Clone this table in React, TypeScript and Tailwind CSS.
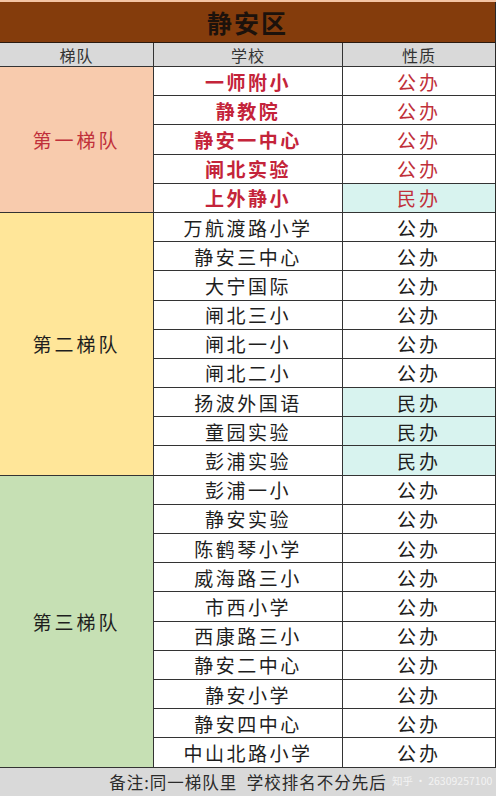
import React from "react";

type Row = { name: string; type: "公办" | "民办" };
type Tier = { label: string; red: boolean; bg: string; span: string; rows: Row[] };

const tiers: Tier[] = [
  {
    label: "第一梯队",
    red: true,
    bg: "bg-[#f8cbad]",
    span: "row-span-5",
    rows: [
      { name: "一师附小", type: "公办" },
      { name: "静教院", type: "公办" },
      { name: "静安一中心", type: "公办" },
      { name: "闸北实验", type: "公办" },
      { name: "上外静小", type: "民办" },
    ],
  },
  {
    label: "第二梯队",
    red: false,
    bg: "bg-[#ffe699]",
    span: "row-span-9",
    rows: [
      { name: "万航渡路小学", type: "公办" },
      { name: "静安三中心", type: "公办" },
      { name: "大宁国际", type: "公办" },
      { name: "闸北三小", type: "公办" },
      { name: "闸北一小", type: "公办" },
      { name: "闸北二小", type: "公办" },
      { name: "扬波外国语", type: "民办" },
      { name: "童园实验", type: "民办" },
      { name: "彭浦实验", type: "民办" },
    ],
  },
  {
    label: "第三梯队",
    red: false,
    bg: "bg-[#c6e0b4]",
    span: "row-span-10",
    rows: [
      { name: "彭浦一小", type: "公办" },
      { name: "静安实验", type: "公办" },
      { name: "陈鹤琴小学", type: "公办" },
      { name: "威海路三小", type: "公办" },
      { name: "市西小学", type: "公办" },
      { name: "西康路三小", type: "公办" },
      { name: "静安二中心", type: "公办" },
      { name: "静安小学", type: "公办" },
      { name: "静安四中心", type: "公办" },
      { name: "中山北路小学", type: "公办" },
    ],
  },
];

export default function App() {
  return (
    <div
      className="w-[500px] h-[796px] bg-white overflow-hidden flex flex-col"
      style={{ fontFamily: '"Noto Sans CJK SC", "Noto Sans", sans-serif' }}
    >
      <div className="h-[2px] w-[496px] bg-[#f4c4a4]" />
      <div className="w-[496px] border-r-[1.5px] border-[#2a2a2a] flex flex-col">
        <div className="h-[41px] bg-[#843c0c] border-b border-[#2a1a10] flex items-center justify-center">
          <span className="text-[25px] font-bold text-[#1c120c] tracking-[2px] leading-none">静安区</span>
        </div>
        <div className="h-[24px] bg-[#d9d9d9] border-b border-[#333] grid grid-cols-[154px_189px_1fr] text-[16px] text-[#333] leading-none">
          <div className="flex items-center justify-center border-r-[1.5px] border-[#333] tracking-[1px]">梯队</div>
          <div className="flex items-center justify-center border-r-[1.5px] border-[#333] tracking-[1px]">学校</div>
          <div className="flex items-center justify-center tracking-[1px]">性质</div>
        </div>
        <div className="grid grid-cols-[154px_189px_1fr] grid-rows-[repeat(24,29.2px)]">
          {tiers.map((tier) => (
            <React.Fragment key={tier.label}>
              <div
                className={`${tier.span} ${tier.bg} border-r-[1.5px] border-b-[1.5px] border-[#333] flex items-center justify-center text-[19px] tracking-[3px] leading-none ${
                  tier.red ? "text-[#c0303a]" : "text-[#1e1e1e]"
                }`}
                style={{ gridColumn: 1 }}
              >
                {tier.label}
              </div>
              {tier.rows.map((r, i) => {
                const last = i === tier.rows.length - 1;
                return (
                  <React.Fragment key={r.name}>
                    <div
                      className={`col-start-2 bg-white border-r-[1.5px] border-[#333] ${
                        last ? "border-b-[1.5px]" : "border-b"
                      } flex items-center justify-center text-[19px] tracking-[2.5px] leading-none ${
                        tier.red ? "text-[#c4243a] font-bold" : "text-[#1e1e1e]"
                      }`}
                    >
                      {r.name}
                    </div>
                    <div
                      className={`col-start-3 ${
                        r.type === "民办" ? "bg-[#d8f3ef]" : "bg-white"
                      } border-[#333] ${last ? "border-b-[1.5px]" : "border-b"} flex items-center justify-center text-[19px] tracking-[3px] leading-none ${
                        tier.red ? "text-[#c0303a]" : "text-[#1e1e1e]"
                      }`}
                    >
                      {r.type}
                    </div>
                  </React.Fragment>
                );
              })}
            </React.Fragment>
          ))}
        </div>
      </div>
      <div className="relative flex-1 w-[496px] bg-[#d9d9d9] flex items-center justify-center">
        <span className="text-[16.5px] text-[#2a2a2a] tracking-[1px] leading-none">备注:同一梯队里&nbsp;&nbsp;学校排名不分先后</span>
        <span className="absolute left-[392px] top-[8px] text-[10.5px] text-white/70 leading-none whitespace-nowrap">
          知乎 · 26309257100
        </span>
      </div>
    </div>
  );
}
